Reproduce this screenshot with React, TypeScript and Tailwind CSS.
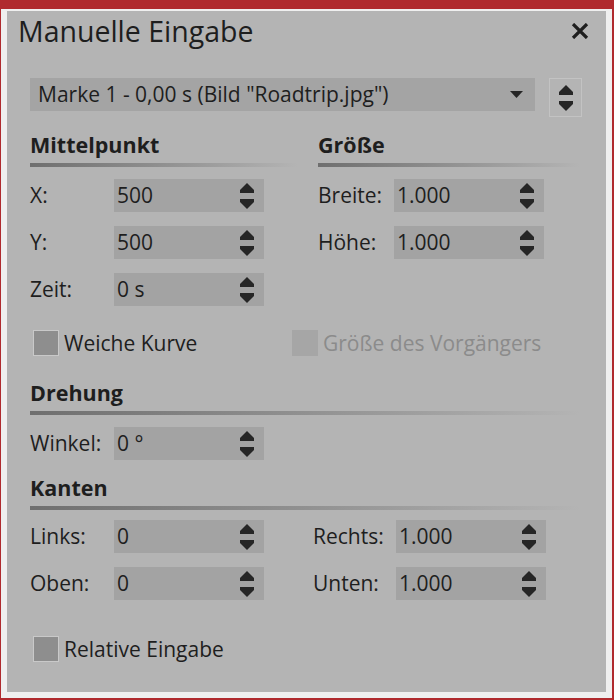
import React from 'react'

function Spin() {
  return (
    <svg aria-hidden="true" width="14" height="26" viewBox="0 0 14 26" className="shrink-0">
      <path d="M7 0L14 7V10H0V7Z" fill="#262626" />
      <path d="M0 16H14V19L7 26L0 19Z" fill="#262626" />
    </svg>
  )
}

function NumField({ value }: { value: string }) {
  return (
    <div className="flex h-[33px] w-[150px] items-center justify-between bg-[#a3a3a3] pl-[3px] pr-[10px]">
      <span>{value}</span>
      <Spin />
    </div>
  )
}

function Field({ label, value, labelW }: { label: string; value: string; labelW: string }) {
  return (
    <div className="flex items-center">
      <span className={labelW}>{label}</span>
      <NumField value={value} />
    </div>
  )
}

function Heading({ title, className = '' }: { title: string; className?: string }) {
  return (
    <div className={className}>
      <p className="h-[24px] text-[21.5px] font-bold leading-[24px]">{title}</p>
      <div className="mt-[6px] h-[4px] bg-gradient-to-r from-[#6f6f6f] to-[#b4b4b4]" />
    </div>
  )
}

function Check({ label, disabled = false }: { label: string; disabled?: boolean }) {
  return (
    <div className={`flex items-center gap-[5px] ${disabled ? 'text-[#8b8b8b]' : ''}`}>
      <span
        className={
          disabled
            ? 'h-[26px] w-[26px] bg-[#a6a6a6]'
            : 'h-[26px] w-[26px] border border-[#c9c9c9] bg-[#8e8e8e]'
        }
      />
      <span>{label}</span>
    </div>
  )
}

export default function App() {
  return (
    <div className="h-[700px] w-[614px] bg-[#b02a2e] pb-[2px] pl-px pr-[2px] pt-[9px] font-['Open_Sans',sans-serif] text-[21px] leading-none text-[#1e1e1e]">
      <div className="h-full bg-[#efefef] pb-[6px] pl-[6px] pr-[6px] pt-[2px]">
        <div className="h-full bg-[#b4b4b4]">
          <header className="flex h-[40px] items-center justify-between pl-[11px] pr-[17px]">
            <h1 className="text-[28.5px] font-normal">Manuelle Eingabe</h1>
            <svg aria-hidden="true" width="18" height="16" viewBox="0 0 18 16">
              <path d="M2 1L16 15M16 1L2 15" stroke="#1e1e1e" strokeWidth="3.2" />
            </svg>
          </header>

          <div className="pl-[23px] pr-[20px] pt-[27px]">
            <div className="flex items-start gap-[14px]">
              <div className="flex h-[33px] w-[505px] items-center justify-between bg-[#a4a4a4] pl-[8px] pr-[12px]">
                <span>Marke 1 - 0,00 s (Bild "Roadtrip.jpg")</span>
                <svg aria-hidden="true" width="13" height="7" viewBox="0 0 13 7">
                  <path d="M0 0H13L6.5 7Z" fill="#262626" />
                </svg>
              </div>
              <div className="flex h-[39px] w-[33px] items-center justify-center border border-[#c3c3c3]">
                <Spin />
              </div>
            </div>

            <div className="mt-[16px] grid grid-cols-[288px_1fr] pr-[6px]">
              <Heading title="Mittelpunkt" className="pr-[20px]" />
              <Heading title="Größe" />
            </div>

            <div className="mt-[12px] grid grid-cols-[288px_1fr]">
              <div className="flex flex-col gap-[14px]">
                <Field label="X:" value="500" labelW="w-[84px]" />
                <Field label="Y:" value="500" labelW="w-[84px]" />
                <Field label="Zeit:" value="0 s" labelW="w-[84px]" />
              </div>
              <div className="flex flex-col gap-[14px]">
                <Field label="Breite:" value="1.000" labelW="w-[76px]" />
                <Field label="Höhe:" value="1.000" labelW="w-[76px]" />
              </div>
            </div>

            <div className="mt-[24px] grid grid-cols-[259px_1fr] pl-[3px]">
              <Check label="Weiche Kurve" />
              <Check label="Größe des Vorgängers" disabled />
            </div>

            <Heading title="Drehung" className="mr-[6px] mt-[25px]" />

            <div className="mt-[12px]">
              <Field label="Winkel:" value="0 °" labelW="w-[84px]" />
            </div>

            <Heading title="Kanten" className="mr-[6px] mt-[16px]" />

            <div className="mt-[10px] grid grid-cols-[283px_1fr]">
              <div className="flex flex-col gap-[14px]">
                <Field label="Links:" value="0" labelW="w-[84px]" />
                <Field label="Oben:" value="0" labelW="w-[84px]" />
              </div>
              <div className="flex flex-col gap-[14px]">
                <Field label="Rechts:" value="1.000" labelW="w-[83px]" />
                <Field label="Unten:" value="1.000" labelW="w-[83px]" />
              </div>
            </div>

            <div className="mt-[36px] pl-[3px]">
              <Check label="Relative Eingabe" />
            </div>
          </div>
        </div>
      </div>
    </div>
  )
}
